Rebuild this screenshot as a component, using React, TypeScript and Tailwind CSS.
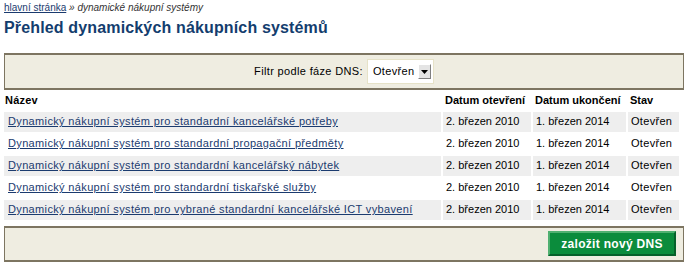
import React from "react";

const rows = [
  "Dynamický nákupní systém pro standardní kancelářské potřeby",
  "Dynamický nákupní systém pro standardní propagační předměty",
  "Dynamický nákupní systém pro standardní kancelářský nábytek",
  "Dynamický nákupní systém pro standardní tiskařské služby",
  "Dynamický nákupní systém pro vybrané standardní kancelářské ICT vybavení",
];

export default function App() {
  return (
    <div className="w-[687px] h-[270px] bg-white pl-[4px] pr-[3px] text-[#000] font-['Liberation_Sans',Arial,sans-serif] overflow-hidden">
      <div className="pt-[2px] text-[10px] leading-[12px] h-[14px]">
        <a href="#" className="underline text-[#1b3b6f]">hlavní stránka</a>
        <span className="italic text-[#333]"> » dynamické nákupní systémy</span>
      </div>
      <h1 className="mt-[3px] h-[22px] text-[16px] leading-[22px] tracking-[0.15px] font-bold text-[#133d6e]">
        Přehled dynamických nákupních systémů
      </h1>
      <div className="mt-[14px] h-[37px] bg-[#efede1] border-x border-y-2 border-[#7d7561] flex items-center justify-center gap-[4px]">
        <span className="text-[11px] tracking-[0.35px]">Filtr podle fáze DNS:</span>
        <div className="h-[25px] w-[67px] bg-white border border-[#e6e2c8] flex items-center pl-[5px] pr-[2px] justify-between">
          <span className="text-[11px] tracking-[0.35px]">Otevřen</span>
          <span className="w-[13px] h-[15px] bg-[#e4e4e4] border border-[#808080] border-t-white border-l-white flex items-center justify-center">
            <svg width="7" height="4" viewBox="0 0 7 4"><path d="M0 0h7L3.5 4z" fill="#000" /></svg>
          </span>
        </div>
      </div>
      <table className="table-fixed w-[679px] border-separate border-spacing-[2px] -ml-[2px] text-[11px]">
        <colgroup>
          <col className="w-[437px]" />
          <col className="w-[88px]" />
          <col className="w-[93px]" />
          <col className="w-[51px]" />
        </colgroup>
        <thead>
          <tr className="h-[17px] text-left align-bottom">
            <th className="pl-[1px] pb-[1px] font-bold tracking-[0.2px]">Název</th>
            <th className="pl-[2px] pb-[1px] font-bold whitespace-nowrap">Datum otevření</th>
            <th className="pl-[2px] pb-[1px] font-bold whitespace-nowrap">Datum ukončení</th>
            <th className="pl-[2px] pb-[1px] font-bold">Stav</th>
          </tr>
        </thead>
        <tbody>
          {rows.map((r, i) => {
            const bg = i % 2 === 0 ? "bg-[#eeeeee]" : "bg-white";
            return (
              <tr key={i} className="h-[20px]">
                <td className={`${bg} pl-[4px] whitespace-nowrap`}>
                  <a href="#" className="underline text-[#1b3b6f] tracking-[0.35px]">{r}</a>
                </td>
                <td className={`${bg} pl-[3px] whitespace-nowrap`}>2. březen 2010</td>
                <td className={`${bg} pl-[3px] whitespace-nowrap`}>1. březen 2014</td>
                <td className={`${bg} pl-[3px] whitespace-nowrap tracking-[0.3px]`}>Otevřen</td>
              </tr>
            );
          })}
        </tbody>
      </table>
      <div className="mt-[4px] h-[36px] bg-[#efede1] border-x border-y-2 border-[#7d7561] flex items-center justify-end pr-[7px]">
        <button className="h-[25px] w-[128px] bg-[#0b8c3c] border-2 border-[#06602a] border-t-[#4fb070] border-l-[#4fb070] text-white font-bold text-[12px] tracking-[0.3px]">
          založit nový DNS
        </button>
      </div>
    </div>
  );
}
